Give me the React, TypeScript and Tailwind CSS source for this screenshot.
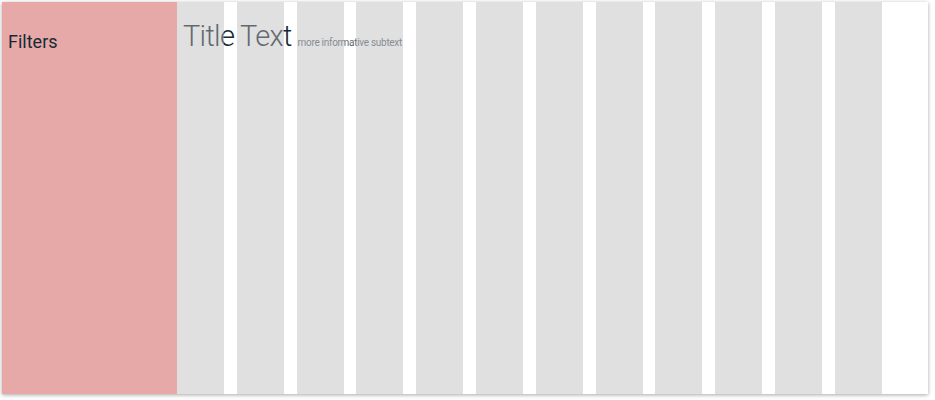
import React from 'react';

const columns = Array.from({ length: 12 }, (_, i) => i);

// Grid overlay columns lie over the page content, lightening what sits beneath them.
function GridOverlay() {
  return (
    <div aria-hidden className="pointer-events-none absolute inset-0 flex gap-[12.8px]">
      {columns.map((c) => (
        <div key={c} className="h-full w-[47px] shrink-0 bg-[rgba(186,186,186,0.45)]" />
      ))}
    </div>
  );
}

export default function App() {
  return (
    <div className="h-[400px] w-[935px] bg-white pl-[2px] pt-[2px]" style={{ fontFamily: 'Roboto, "Noto Sans", sans-serif' }}>
      <div className="flex h-[392px] w-[926px] bg-white shadow-[0_1px_4px_rgba(0,0,0,0.35)]">
        <aside className="w-[175px] shrink-0 bg-[#e6a9a8] px-[6px] pt-[29px]">
          <h2 className="text-[18px] leading-[22px] font-normal text-[#152935]">Filters</h2>
        </aside>
        <main className="relative flex-1 overflow-hidden">
          <div className="flex items-baseline gap-[6px] px-[6px] pt-[16px]">
            <h1 className="text-[29px] leading-[36px] font-light tracking-[-0.7px] text-[#152935]">Title Text</h1>
            <span className="text-[10px] tracking-[-0.3px] text-[#5a6872]">more informative subtext</span>
          </div>
          <GridOverlay />
        </main>
      </div>
    </div>
  );
}
